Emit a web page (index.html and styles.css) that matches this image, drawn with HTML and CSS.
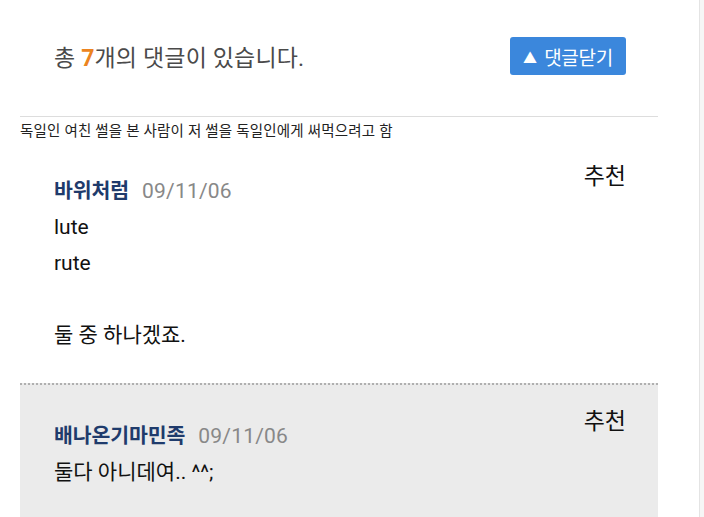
FILE: index.html
```html
<!DOCTYPE html>
<html lang="ko">
<head>
<meta charset="utf-8">
<link rel="stylesheet" href="styles.css">
</head>
<body>
<div class="page">
  <div class="main">
    <div class="head">
      <div class="count">총 <b class="num">7</b>개의 댓글이 있습니다.</div>
      <button class="close-btn"><span class="tri">▲</span> 댓글닫기</button>
    </div>
    <div class="subject">독일인 여친 썰을 본 사람이 저 썰을 독일인에게 써먹으려고 함</div>
    <div class="comment">
      <div class="rec">추천</div>
      <div class="meta"><span class="name">바위처럼</span><span class="date">09/11/06</span></div>
      <div class="body">lute<br>rute<br><br>둘 중 하나겠죠.</div>
    </div>
    <div class="comment alt">
      <div class="rec">추천</div>
      <div class="meta"><span class="name">배나온기마민족</span><span class="date">09/11/06</span></div>
      <div class="body">둘다 아니데여.. ^^;</div>
    </div>
  </div>
  <div class="side"></div>
</div>
</body>
</html>
```
FILE: styles.css
```css
html, body {
  margin: 0;
  padding: 0;
  background: #fff;
}
body {
  font-family: Roboto, "Noto Sans CJK KR", sans-serif;
  color: #111;
}
.page {
  display: flex;
  min-height: 517px;
}
.main {
  width: 638px;
  padding: 0 41px 0 20px;
  border-right: 1px solid #e4e4e4;
}
.side {
  flex: 1;
  background: #f6f6f6;
}
.head {
  display: flex;
  align-items: center;
  justify-content: space-between;
  margin-top: 37px;
  padding: 0 32px 0 34px;
  height: 38px;
}
.count {
  font-size: 23px;
  color: #4a4a4a;
  letter-spacing: 0.15px;
}
.num {
  color: #ec8420;
  font-weight: 700;
}
.close-btn {
  width: 116px;
  height: 38px;
  border: 0;
  border-radius: 3px;
  background: #3b87dc;
  color: #fff;
  font-family: Roboto, "Noto Sans CJK KR", sans-serif;
  font-size: 19px;
  padding: 0;
  letter-spacing: -0.3px;
}
.tri {
  font-size: 14px;
  position: relative;
  top: -2px;
  margin-right: 3px;
}
.subject {
  margin-top: 41px;
  border-top: 1px solid #ddd;
  padding-top: 6px;
  font-size: 14.5px;
  line-height: 18px;
  color: #222;
  letter-spacing: 0.2px;
}
.comment {
  padding: 32px 32px 30px 34px;
}
.comment.alt {
  background: #ebebeb;
  border-top: 2px dotted #b0b0b0;
  padding-top: 33px;
}
.rec {
  float: right;
  font-size: 23px;
  line-height: 28px;
  margin-top: -10px;
  color: #111;
}
.meta {
  line-height: 36px;
  height: 36px;
}
.name {
  font-size: 20.5px;
  font-weight: 700;
  color: #1f3b6c;
  letter-spacing: -0.1px;
}
.date {
  font-size: 21px;
  color: #888;
  margin-left: 13px;
  letter-spacing: 0.2px;
}
.body {
  font-size: 21px;
  line-height: 36px;
}
```
